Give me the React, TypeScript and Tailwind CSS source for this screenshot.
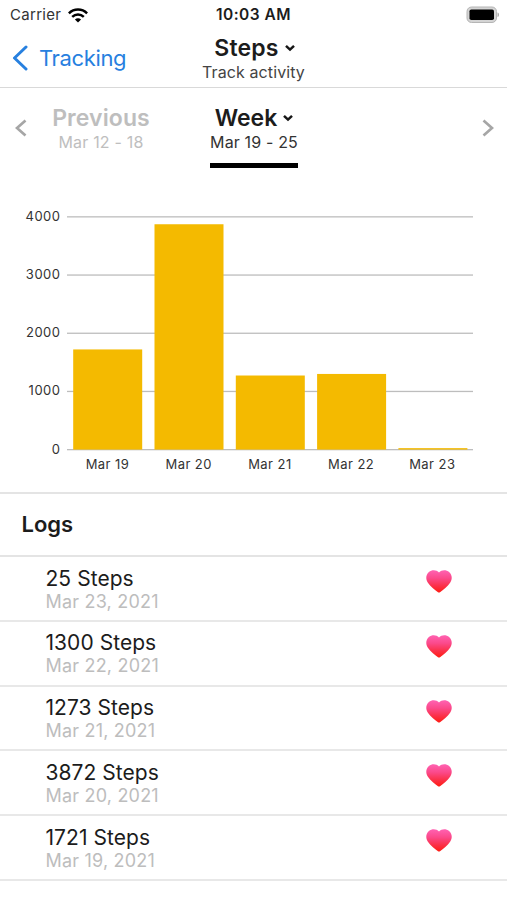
import React from "react";

const days = [
  { label: "Mar 19", date: "Mar 19, 2021", steps: 1721 },
  { label: "Mar 20", date: "Mar 20, 2021", steps: 3872 },
  { label: "Mar 21", date: "Mar 21, 2021", steps: 1273 },
  { label: "Mar 22", date: "Mar 22, 2021", steps: 1300 },
  { label: "Mar 23", date: "Mar 23, 2021", steps: 25 },
];

function Caret() {
  return (
    <svg width="10" height="8" viewBox="0 0 10 8" fill="none">
      <path d="M1 1.8 5 5.6 9 1.8" stroke="#161616" strokeWidth="2.5" />
    </svg>
  );
}

function Wifi() {
  return (
    <svg width="20" height="15" viewBox="0 0 20 15" fill="none" stroke="#000" strokeWidth="2.5">
      <path d="M.9 5.3C6 .3 14 .3 19.1 5.3" />
      <path d="M4.2 8.9C7.5 5.8 12.5 5.8 15.8 8.9" />
      <path d="M10 14.6 6.9 11.5C8.6 9.9 11.4 9.9 13.1 11.5Z" fill="#000" stroke="none" />
    </svg>
  );
}

function Battery() {
  return (
    <svg width="34" height="18" viewBox="0 0 34 18">
      <rect x="1" y="1" width="29.5" height="15.5" rx="4.5" fill="#d4d4d4" stroke="#b5b5b5" />
      <rect x="3.5" y="3.5" width="24.5" height="10.5" rx="1.8" fill="#000" />
      <path d="M31.5 6.5C33.5 7 33.5 10.5 31.5 11Z" fill="#aaa" />
    </svg>
  );
}

function Heart() {
  return (
    <svg width="26" height="23" viewBox="0 0 26 23">
      <defs>
        <linearGradient id="heart" x1="0" y1="0" x2="0" y2="1">
          <stop offset="0" stopColor="#ff62b2" />
          <stop offset="0.35" stopColor="#fb4a8c" />
          <stop offset="0.7" stopColor="#fb3048" />
          <stop offset="1" stopColor="#ff1c12" />
        </linearGradient>
      </defs>
      <path
        d="M13 2.6C10.5-.4 5.7-.3 2.9 2C-.3 4.8-.5 9.4 1.9 12.8C4.4 16.6 8.7 20 12 22.3Q13 22.9 14 22.3C17.3 20 21.6 16.6 24.1 12.8C26.5 9.4 26.3 4.8 23.1 2C20.3-.3 15.5-.4 13 2.6Z"
        fill="url(#heart)"
      />
    </svg>
  );
}

function Chart() {
  const base = 250;
  const scale = 58.2 / 1000;
  return (
    <svg className="block shrink-0" width="507" height="291.5" viewBox="0 200 507 291.5" fontSize="13" fill="#333">
      {[0, 1000, 2000, 3000, 4000].map((v) => (
        <g key={v}>
          <rect x="67" y={base + 199 - v * scale} width="406" height="1.3" fill="#bdbdbd" />
          <text x="60.5" y={base + 203.6 - v * scale} textAnchor="end" letterSpacing="0.5">
            {v}
          </text>
        </g>
      ))}
      {days.map((d, i) => (
        <g key={d.label}>
          <rect
            x={73.2 + i * 81.3}
            y={base + 199.6 - d.steps * scale}
            width="69"
            height={d.steps * scale}
            fill="#f4ba00"
          />
          <text x={107.5 + i * 81.2} y="469" textAnchor="middle" letterSpacing="0.45">
            {d.label}
          </text>
        </g>
      ))}
    </svg>
  );
}

export default function App() {
  return (
    <div className="flex h-[900px] w-[507px] flex-col overflow-hidden bg-white font-['Inter',sans-serif] text-[#1c1c1c]">
      <div className="grid h-[30px] shrink-0 grid-cols-3 items-center">
        <div className="flex items-center gap-[7px] pl-[10px] text-[15px] text-[#333]">
          <span className="tracking-[0.3px]">Carrier</span>
          <Wifi />
        </div>
        <div className="text-center text-[15.5px] font-semibold tracking-[0.45px]">10:03 AM</div>
        <div className="flex justify-end pr-[7px]">
          <Battery />
        </div>
      </div>

      <header className="grid h-[58px] shrink-0 grid-cols-3 border-b-[1.5px] border-[#d9d9d9]">
        <div className="flex h-[55px] items-center gap-[11px] pl-[12px] text-[22px] text-[#2780df]">
          <svg width="16" height="26" viewBox="0 0 16 26" fill="none">
            <path d="M14 2 2.5 13 14 24" stroke="currentColor" strokeWidth="3" strokeLinecap="round" strokeLinejoin="round" />
          </svg>
          <span className="pt-px tracking-[-0.35px]">Tracking</span>
        </div>
        <div className="flex flex-col items-center pt-[4px]">
          <div className="flex items-center gap-[6px] pl-[2px]">
            <span className="text-[23px] leading-[28px] font-semibold tracking-[0.2px]">Steps</span>
            <Caret />
          </div>
          <span className="text-[16px] leading-[21px] tracking-[0.1px] text-[#444]">Track activity</span>
        </div>
      </header>

      <nav className="flex h-[112px] shrink-0 items-start pt-[16px]">
        <svg className="mt-[15px] ml-[15px] shrink-0" width="12" height="18" viewBox="0 0 12 18" fill="none">
          <path d="M10.5 1.5 2 9l8.5 7.5" stroke="#a6a6a6" strokeWidth="2.7" />
        </svg>
        <div className="ml-[24px] flex w-[100px] flex-col items-center text-[#bebebe]">
          <span className="text-[23px] leading-[28px] font-semibold tracking-[0.1px]">Previous</span>
          <span className="text-[16px] leading-[21px] tracking-[0.2px]">Mar 12 - 18</span>
        </div>
        <div className="ml-[59px] flex w-[88px] flex-col items-center">
          <div className="flex items-center gap-[6px]">
            <span className="text-[23px] leading-[28px] font-semibold">Week</span>
            <Caret />
          </div>
          <span className="text-[16px] leading-[21px] tracking-[0.15px] whitespace-nowrap text-[#333]">Mar 19 - 25</span>
          <div className="mt-[10px] h-[5px] w-full bg-black" />
        </div>
        <svg className="mt-[15px] mr-[13px] ml-auto" width="12" height="18" viewBox="0 0 12 18" fill="none">
          <path d="M1.5 1.5 10 9l-8.5 7.5" stroke="#a6a6a6" strokeWidth="2.7" />
        </svg>
      </nav>

      <Chart />

      <h2 className="flex h-[65.5px] shrink-0 items-center border-y-2 border-[#e4e4e4] pt-px pl-[21.5px] text-[22px] font-semibold">
        Logs
      </h2>

      <ul className="shrink-0">
        {[...days].reverse().map((d) => (
          <li key={d.date} className="flex h-[64.8px] justify-between border-b-2 border-[#e8e8e8] pr-[55px] pl-[45.5px]">
            <div className="flex flex-col pt-[8.5px]">
              <span className="text-[21px] leading-[26px] tracking-[0.05px]">{d.steps} Steps</span>
              <span className="text-[18px] leading-[20px] tracking-[0.2px] text-[#bdbdbd]">{d.date}</span>
            </div>
            <div className="pt-[13px]">
              <Heart />
            </div>
          </li>
        ))}
      </ul>
    </div>
  );
}
